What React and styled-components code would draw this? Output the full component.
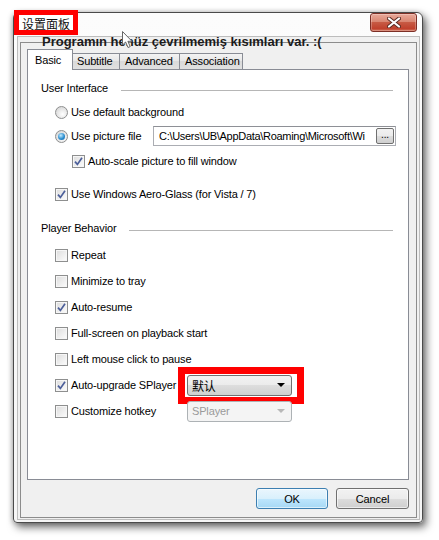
import React from "react";
import styled, { createGlobalStyle } from "styled-components";

const GlobalStyle = createGlobalStyle`
  html, body {
    margin: 0;
    padding: 0;
    background: #fff;
  }
  body {
    font-family: "Liberation Sans", Arial, sans-serif;
    font-size: 11px;
    letter-spacing: -0.15px;
    color: #000;
  }
  * {
    box-sizing: border-box;
  }
`;

const Page = styled.div`
  width: 439px;
  height: 540px;
  padding: 12px 0 0 13px;
  overflow: hidden;
`;

const Window = styled.div`
  position: relative;
  width: 410px;
  height: 511px;
  display: flex;
  flex-direction: column;
  background: linear-gradient(#fcfcfc, #f5f5f5);
  border: 1px solid #4a4a4a;
  border-radius: 6px 6px 4px 4px;
  box-shadow: 3px 4px 9px rgba(0, 0, 0, 0.6), -1px 0 5px rgba(0, 0, 0, 0.2);
  padding: 0 2px 2px 3px;
`;

const TitleBar = styled.div`
  height: 23px;
  display: flex;
  justify-content: flex-end;
  align-items: flex-start;
`;

const CloseButton = styled.div`
  width: 47px;
  height: 19px;
  margin-right: 3px;
  display: flex;
  align-items: center;
  justify-content: center;
  border: 1px solid #7d2f26;
  border-radius: 3px;
  background: linear-gradient(#e9a99a, #d98672 45%, #c75a44 50%, #c0412d 85%, #d2735c);
  box-shadow: inset 0 0 0 1px rgba(255, 255, 255, 0.25);
`;

const TitleMark = styled.div`
  position: absolute;
  left: 0;
  top: -3px;
  width: 64px;
  height: 25px;
  border: 5px solid #ff0000;
  background: #fff;
  padding-left: 3px;
  display: flex;
  align-items: flex-end;
  font-family: "Noto Sans CJK SC", sans-serif;
  font-size: 12px;
  line-height: 13px;
  letter-spacing: 0;
  color: #111;
`;

const Cursor = styled.svg`
  position: absolute;
  left: 108px;
  top: 18px;
`;

const Client = styled.div`
  flex: 1;
  display: flex;
  flex-direction: column;
  background: #f0f0f0;
  border: 1px solid #bdbdbd;
  padding: 5px 2px 1px 2px;
`;

const GroupBox = styled.div`
  flex: 1;
  display: flex;
  flex-direction: column;
  border: 1px solid #8c8c8c;
  padding: 0 7px 8px 6px;
`;

const Caption = styled.div`
  height: 13px;
  margin: -8px 0 1px 15px;
  font-weight: bold;
  font-size: 13px;
  line-height: 13px;
  letter-spacing: 0;
  color: #1b1b1b;
  white-space: nowrap;
`;

const TabStrip = styled.div`
  height: 21px;
  margin-bottom: -1px;
  display: flex;
  align-items: flex-end;
  position: relative;
  z-index: 1;
`;

const Tab = styled.div`
  width: ${(p) => p.$w}px;
  height: ${(p) => (p.$active ? 21 : 16)}px;
  margin-left: ${(p) => (p.$first ? 0 : -1)}px;
  margin-bottom: ${(p) => (p.$active ? 0 : 1)}px;
  border: 1px solid #898c95;
  border-bottom: none;
  background: ${(p) => (p.$active ? "#fff" : "linear-gradient(#f3f3f3, #e6e6e6 50%, #dadada 50%, #e0e0e0)")};
  padding-left: ${(p) => p.$pad}px;
  line-height: ${(p) => (p.$active ? 20 : 15)}px;
  white-space: nowrap;
`;

const TabPage = styled.div`
  height: 411px;
  display: flex;
  flex-direction: column;
  border: 1px solid #898c95;
  background: #fff;
  padding-top: 6px;
`;

const SectionHeader = styled.div`
  height: ${(p) => p.$h}px;
  margin-top: ${(p) => p.$mt || 0}px;
  display: flex;
  align-items: center;
  padding: 0 15px 0 13px;
  &::after {
    content: "";
    flex: 1;
    height: 1px;
    margin: 4px 0 0 13px;
    background: #b6b6b6;
  }
`;

const Row = styled.div`
  height: ${(p) => p.$h || 26}px;
  margin-top: ${(p) => p.$mt || 0}px;
  display: flex;
  align-items: center;
  padding: 0 12px 0 ${(p) => p.$indent}px;
`;

const Label = styled.span`
  margin-left: 3px;
  white-space: nowrap;
  ${(p) => (p.$w ? `flex: 0 0 ${p.$w}px;` : "")}
`;

const Box = styled.span`
  width: 13px;
  height: 13px;
  flex: 0 0 13px;
  border: 1px solid #8e8f8f;
  background: linear-gradient(135deg, #dcdcdc, #fdfdfd);
  box-shadow: inset 0 0 0 1px #f6f6f6;
  display: flex;
  align-items: center;
  justify-content: center;
`;

const RadioCircle = styled.span`
  width: 13px;
  height: 13px;
  flex: 0 0 13px;
  border-radius: 50%;
  border: 1px solid #8e8f8f;
  background: radial-gradient(circle at 60% 65%, #ffffff, #d8d8d8 80%);
  display: flex;
  align-items: center;
  justify-content: center;
  &::after {
    content: "";
    display: ${(p) => (p.$on ? "block" : "none")};
    width: 7px;
    height: 7px;
    border-radius: 50%;
    background: radial-gradient(circle at 40% 35%, #c6ecff, #2d8fd0 55%, #175d9c);
  }
`;

const PathInput = styled.div`
  margin-left: auto;
  width: 243px;
  height: 20px;
  border: 1px solid #abadb3;
  border-top-color: #8e9096;
  display: flex;
  align-items: center;
  padding: 0 1px 0 5px;
  white-space: nowrap;
  overflow: hidden;
`;

const PathText = styled.span`
  flex: 1;
  overflow: hidden;
  letter-spacing: -0.3px;
`;

const BrowseButton = styled.span`
  width: 18px;
  height: 16px;
  flex: 0 0 18px;
  border: 1px solid #707070;
  border-radius: 2px;
  background: linear-gradient(#f2f2f2, #ebebeb 50%, #dddddd 50%, #cfcfcf);
  font-size: 10px;
  line-height: 11px;
  text-align: center;
`;

const ComboWrap = styled.div`
  position: relative;
  &::after {
    content: "";
    display: ${(p) => (p.$marked ? "block" : "none")};
    position: absolute;
    left: -9px;
    top: -8px;
    right: -12px;
    bottom: -8px;
    border: 7px solid #ff0000;
  }
`;

const Combo = styled.div`
  width: 105px;
  height: 21px;
  display: flex;
  align-items: center;
  justify-content: space-between;
  padding: 0 6px 0 4px;
  border: 1px solid ${(p) => (p.$disabled ? "#adb2b5" : "#707070")};
  border-radius: 3px;
  background: ${(p) =>
    p.$disabled ? "#f4f4f4" : "linear-gradient(#f2f2f2, #ebebeb 50%, #dddddd 50%, #cfcfcf)"};
  color: ${(p) => (p.$disabled ? "#9a9a9a" : "#000")};
  font-family: "Liberation Sans", "Noto Sans CJK SC", sans-serif;
  font-size: ${(p) => (p.$cjk ? 12 : 11)}px;
  &::after {
    content: "";
    border-left: 4px solid transparent;
    border-right: 4px solid transparent;
    border-top: 4px solid ${(p) => (p.$disabled ? "#b8b8b8" : "#000")};
  }
`;

const Footer = styled.div`
  margin-top: 8px;
  display: flex;
  justify-content: flex-end;
  gap: 8px;
`;

const Button = styled.div`
  width: ${(p) => p.$w}px;
  height: 21px;
  border: 1px solid ${(p) => (p.$default ? "#3c7fb1" : "#707070")};
  border-radius: 3px;
  background: ${(p) =>
    p.$default
      ? "linear-gradient(#eaf6fd, #d9f0fc 50%, #bee6fd 50%, #a7d9f5)"
      : "linear-gradient(#f2f2f2, #ebebeb 50%, #dddddd 50%, #cfcfcf)"};
  box-shadow: inset 0 0 0 1px rgba(255, 255, 255, 0.6);
  display: flex;
  align-items: center;
  justify-content: center;
`;

function Check({ on }) {
  return (
    <Box>
      {on && (
        <svg width="9" height="9" viewBox="0 0 9 9">
          <path d="M1 4.6 L3.4 7.4 L8 0.8" fill="none" stroke="#4c5f9a" strokeWidth="1.7" />
        </svg>
      )}
    </Box>
  );
}

function CheckRow({ on, label, indent = 27, h, mt, labelW, children }) {
  return (
    <Row $indent={indent} $h={h} $mt={mt}>
      <Check on={on} />
      <Label $w={labelW}>{label}</Label>
      {children}
    </Row>
  );
}

export default function App() {
  return (
    <>
      <GlobalStyle />
      <Page>
        <Window>
          <TitleBar>
            <CloseButton>
              <svg width="14" height="11" viewBox="0 0 14 11">
                <path d="M2 1.5 L12 9.5 M12 1.5 L2 9.5" stroke="#5a2a22" strokeWidth="4" strokeLinecap="round" />
                <path d="M2 1.5 L12 9.5 M12 1.5 L2 9.5" stroke="#fff" strokeWidth="2.2" strokeLinecap="round" />
              </svg>
            </CloseButton>
          </TitleBar>
          <TitleMark>设置面板</TitleMark>
          <Client>
            <GroupBox>
              <Caption>Programın henüz çevrilmemiş kısımları var. :(</Caption>
              <TabStrip>
                <Tab $active $first $w={46} $pad={7}>Basic</Tab>
                <Tab $w={48} $pad={4}>Subtitle</Tab>
                <Tab $w={61} $pad={5}>Advanced</Tab>
                <Tab $w={64} $pad={5}>Association</Tab>
              </TabStrip>
              <TabPage>
                <SectionHeader $h={24}>User Interface</SectionHeader>
                <Row $indent={27} $h={24}>
                  <RadioCircle />
                  <Label>Use default background</Label>
                </Row>
                <Row $indent={27} $h={24}>
                  <RadioCircle $on />
                  <Label>Use picture file</Label>
                  <PathInput>
                    <PathText>C:\Users\UB\AppData\Roaming\Microsoft\Wi</PathText>
                    <BrowseButton>...</BrowseButton>
                  </PathInput>
                </Row>
                <CheckRow on indent={44} label="Auto-scale picture to fill window" />
                <CheckRow on mt={7} label="Use Windows Aero-Glass (for Vista / 7)" />
                <SectionHeader $h={26} $mt={8}>Player Behavior</SectionHeader>
                <CheckRow mt={1} label="Repeat" />
                <CheckRow label="Minimize to tray" />
                <CheckRow on label="Auto-resume" />
                <CheckRow label="Full-screen on playback start" />
                <CheckRow label="Left mouse click to pause" />
                <CheckRow on label="Auto-upgrade SPlayer" labelW={116}>
                  <ComboWrap $marked>
                    <Combo $cjk>默认</Combo>
                  </ComboWrap>
                </CheckRow>
                <CheckRow label="Customize hotkey" labelW={116}>
                  <ComboWrap>
                    <Combo $disabled>SPlayer</Combo>
                  </ComboWrap>
                </CheckRow>
              </TabPage>
              <Footer>
                <Button $default $w={72}>OK</Button>
                <Button $w={73}>Cancel</Button>
              </Footer>
            </GroupBox>
          </Client>
          <Cursor width="11" height="18" viewBox="0 0 11 18">
            <path
              d="M0.5 0.5 L0.5 14 L3.6 11 L6 16.5 L8.2 15.6 L5.9 10.3 L10 10.3 Z"
              fill="#fff"
              stroke="#666"
              strokeWidth="1"
            />
          </Cursor>
        </Window>
      </Page>
    </>
  );
}
